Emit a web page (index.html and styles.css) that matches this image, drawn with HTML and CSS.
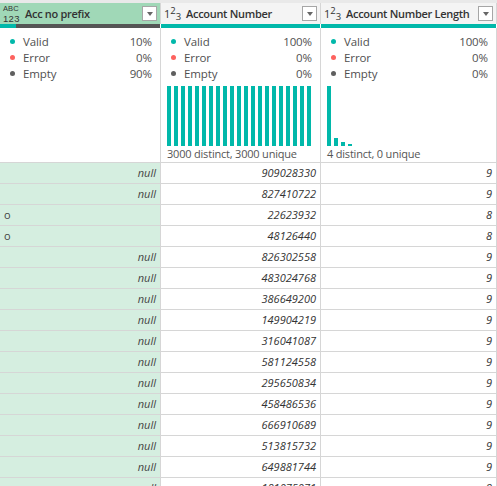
FILE: index.html
```html
<!DOCTYPE html>
<html>
<head>
<meta charset="utf-8">
<link rel="stylesheet" href="styles.css">
</head>
<body>
<div class="grid">
  <div class="topstrip"></div>
  <div class="row headrow">
    <div class="cell c1 hcell sel">
      <span class="ticon abc"><span class="t1">ABC</span><span class="t2">123</span></span>
      <span class="htitle">Acc no prefix</span>
      <span class="dd"></span>
    </div>
    <div class="cell c2 hcell">
      <span class="ticon num">1<sup>2</sup><sub>3</sub></span>
      <span class="htitle">Account Number</span>
      <span class="dd"></span>
    </div>
    <div class="cell c3 hcell">
      <span class="ticon num">1<sup>2</sup><sub>3</sub></span>
      <span class="htitle">Account Number Length</span>
      <span class="dd"></span>
    </div>
  </div>
  <div class="row qrow">
    <div class="cell c1 qcell"><span class="q-valid" style="width:10%"></span><span class="q-empty" style="width:90%"></span></div>
    <div class="cell c2 qcell"><span class="q-valid" style="width:100%"></span></div>
    <div class="cell c3 qcell"><span class="q-valid" style="width:100%"></span></div>
  </div>
  <div class="row statrow">
    <div class="cell c1 stat">
      <div class="sline"><span class="dot valid"></span><span class="lbl">Valid</span><span class="pct">10%</span></div>
      <div class="sline"><span class="dot error"></span><span class="lbl">Error</span><span class="pct">0%</span></div>
      <div class="sline"><span class="dot empty"></span><span class="lbl">Empty</span><span class="pct">90%</span></div>
    </div>
    <div class="cell c2 stat">
      <div class="sline"><span class="dot valid"></span><span class="lbl">Valid</span><span class="pct">100%</span></div>
      <div class="sline"><span class="dot error"></span><span class="lbl">Error</span><span class="pct">0%</span></div>
      <div class="sline"><span class="dot empty"></span><span class="lbl">Empty</span><span class="pct">0%</span></div>
      <div class="hist">
        <span class="bar full"></span><span class="bar full"></span><span class="bar full"></span><span class="bar full"></span><span class="bar full"></span><span class="bar full"></span><span class="bar full"></span>
        <span class="bar full"></span><span class="bar full"></span><span class="bar full"></span><span class="bar full"></span><span class="bar full"></span><span class="bar full"></span><span class="bar full"></span>
        <span class="bar full"></span><span class="bar full"></span><span class="bar full"></span><span class="bar full"></span><span class="bar full"></span><span class="bar full"></span><span class="bar full"></span>
      </div>
      <div class="cap">3000 distinct, 3000 unique</div>
    </div>
    <div class="cell c3 stat">
      <div class="sline"><span class="dot valid"></span><span class="lbl">Valid</span><span class="pct">100%</span></div>
      <div class="sline"><span class="dot error"></span><span class="lbl">Error</span><span class="pct">0%</span></div>
      <div class="sline"><span class="dot empty"></span><span class="lbl">Empty</span><span class="pct">0%</span></div>
      <div class="hist">
        <span class="bar" style="height:60px"></span><span class="bar" style="height:8px"></span><span class="bar" style="height:4px"></span><span class="bar" style="height:2px"></span>
      </div>
      <div class="cap">4 distinct, 0 unique</div>
    </div>
  </div>
  <div class="row drow"><div class="cell c1 dc">null</div><div class="cell c2 dc">909028330</div><div class="cell c3 dc">9</div></div>
  <div class="row drow"><div class="cell c1 dc">null</div><div class="cell c2 dc">827410722</div><div class="cell c3 dc">9</div></div>
  <div class="row drow"><div class="cell c1 dc val">o</div><div class="cell c2 dc">22623932</div><div class="cell c3 dc">8</div></div>
  <div class="row drow"><div class="cell c1 dc val">o</div><div class="cell c2 dc">48126440</div><div class="cell c3 dc">8</div></div>
  <div class="row drow"><div class="cell c1 dc">null</div><div class="cell c2 dc">826302558</div><div class="cell c3 dc">9</div></div>
  <div class="row drow"><div class="cell c1 dc">null</div><div class="cell c2 dc">483024768</div><div class="cell c3 dc">9</div></div>
  <div class="row drow"><div class="cell c1 dc">null</div><div class="cell c2 dc">386649200</div><div class="cell c3 dc">9</div></div>
  <div class="row drow"><div class="cell c1 dc">null</div><div class="cell c2 dc">149904219</div><div class="cell c3 dc">9</div></div>
  <div class="row drow"><div class="cell c1 dc">null</div><div class="cell c2 dc">316041087</div><div class="cell c3 dc">9</div></div>
  <div class="row drow"><div class="cell c1 dc">null</div><div class="cell c2 dc">581124558</div><div class="cell c3 dc">9</div></div>
  <div class="row drow"><div class="cell c1 dc">null</div><div class="cell c2 dc">295650834</div><div class="cell c3 dc">9</div></div>
  <div class="row drow"><div class="cell c1 dc">null</div><div class="cell c2 dc">458486536</div><div class="cell c3 dc">9</div></div>
  <div class="row drow"><div class="cell c1 dc">null</div><div class="cell c2 dc">666910689</div><div class="cell c3 dc">9</div></div>
  <div class="row drow"><div class="cell c1 dc">null</div><div class="cell c2 dc">513815732</div><div class="cell c3 dc">9</div></div>
  <div class="row drow"><div class="cell c1 dc">null</div><div class="cell c2 dc">649881744</div><div class="cell c3 dc">9</div></div>
  <div class="row drow last"><div class="cell c1 dc">null</div><div class="cell c2 dc">181075071</div><div class="cell c3 dc">9</div></div>
</div>
</body>
</html>
```
FILE: styles.css
```css
* { box-sizing: border-box; }
html, body { margin: 0; padding: 0; background: #fff; }
body {
  font-family: "Open Sans", "Noto Sans", "Liberation Sans", sans-serif;
  color: #333;
  overflow: hidden;
  width: 497px;
  height: 486px;
}
.grid { display: flex; flex-direction: column; width: 497px; }
.topstrip { height: 3px; background: #e9e9e9; }
.row { display: flex; }
.cell { border-right: 1px solid #d6d6d6; }
.c1 { width: 161px; }
.c2 { width: 160px; }
.c3 { flex: 1; }

/* header */
.headrow { height: 21px; }
.hcell {
  display: flex;
  align-items: center;
  background: #f4f4f4;
  padding: 0 3px 0 3px;
}
.hcell.sel { background: #a0d8b7; }
.ticon { color: #333; flex: none; }
.abc {
  display: flex;
  flex-direction: column;
  width: 20px;
  font-family: "Liberation Sans", "DejaVu Sans", sans-serif;
}
.abc .t1 { font-size: 7.5px; line-height: 9px; height: 9px; letter-spacing: 0.1px; }
.abc .t2 { font-size: 9.5px; line-height: 11px; height: 11px; letter-spacing: 0.3px; }
.num {
  font-size: 11px;
  width: 20px;
  line-height: 12px;
  margin-top: 1px;
}
.num sup { font-size: 9.5px; vertical-align: 4px; line-height: 0; }
.num sub { font-size: 9.5px; vertical-align: -2px; line-height: 0; }
.htitle {
  font-weight: 600;
  font-size: 11px;
  color: #333;
  margin-left: 2px;
  white-space: nowrap;
  letter-spacing: -0.3px;
}
.dd {
  margin-left: auto;
  width: 15px;
  height: 15px;
  background: #fff;
  border: 1px solid #a6a6a6;
  display: flex;
  align-items: center;
  justify-content: center;
  flex: none;
}
.dd::after {
  content: "";
  width: 0; height: 0;
  border-left: 3.5px solid transparent;
  border-right: 3.5px solid transparent;
  border-top: 4px solid #666;
  margin-top: 1px;
}

/* quality bar */
.qrow { height: 4px; }
.qcell { display: flex; border-right: 1px solid #fff; }
.q-valid { background: #01b8aa; height: 4px; }
.q-empty { background: #555; height: 4px; }

/* stats */
.statrow { height: 135px; border-bottom: 1px solid #d6d6d6; }
.stat { padding: 5px 8px 0 8px; font-size: 11.5px; color: #555; }
.sline { display: flex; align-items: center; height: 16px; }
.dot { width: 5px; height: 5px; border-radius: 50%; margin-left: 2px; margin-right: 8px; flex: none; }
.dot.valid { background: #01b8aa; }
.dot.error { background: #fd625e; }
.dot.empty { background: #5f5f5f; }
.lbl { color: #505050; letter-spacing: -0.1px; }
.pct { margin-left: auto; color: #505050; letter-spacing: -0.1px; }
.hist {
  display: flex;
  align-items: flex-end;
  gap: 3px;
  height: 60px;
  margin-top: 5px;
  margin-left: -2px;
}
.bar { width: 4px; background: #01b8aa; display: block; }
.bar.full { height: 60px; }
.cap { font-size: 11px; color: #555; line-height: 15px; margin-left: -2px; white-space: nowrap; letter-spacing: -0.2px; }

/* data rows */
.drow { height: 21px; border-bottom: 1px solid #d6d6d6; flex: none; }
.drow.last { height: 10px; overflow: hidden; border-bottom: 0; }
.dc {
  font-style: italic;
  font-size: 11px;
  text-align: right;
  padding: 0 4px;
  line-height: 20px;
  color: #333;
}
.drow.last .dc { line-height: 20px; overflow: hidden; height: 10px; }
.drow .c1 { background: #d5eee0; color: #444; }
.drow .c1.val { text-align: left; font-style: normal; }
```
